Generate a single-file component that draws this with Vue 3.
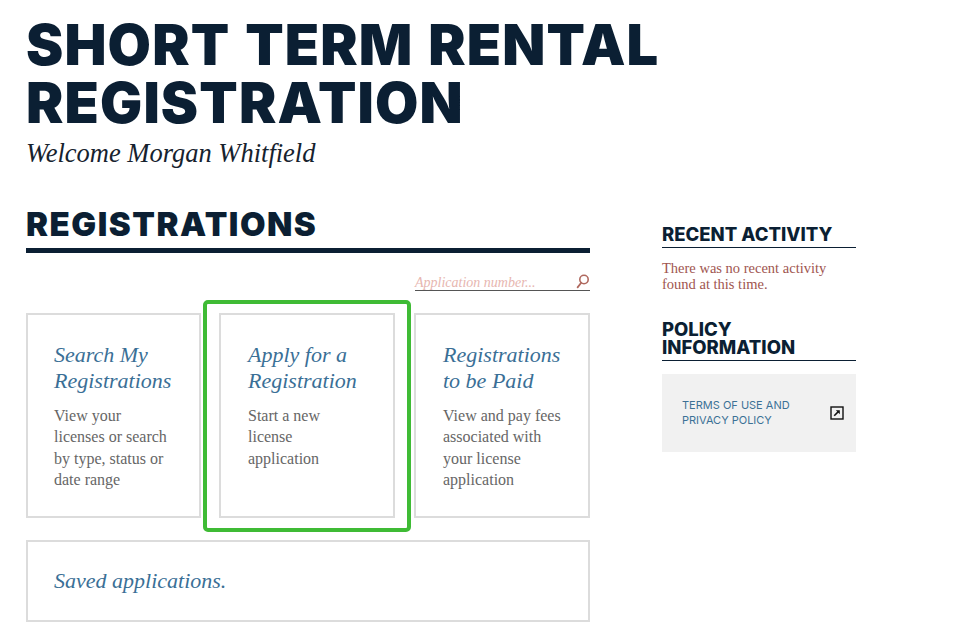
<script setup>
const cards = [
  { title: ['Search My', 'Registrations'], lines: ['View your', 'licenses or search', 'by type, status or', 'date range'] },
  { title: ['Apply for a', 'Registration'], lines: ['Start a new', 'license', 'application'], active: true },
  { title: ['Registrations', 'to be Paid'], lines: ['View and pay fees', 'associated with', 'your license', 'application'] }
]
</script>

<template>
  <div class="page">
    <header class="head">
      <h1 class="title">SHORT TERM RENTAL<br />REGISTRATION</h1>
      <p class="welcome">Welcome Morgan Whitfield</p>
    </header>
    <div class="columns">
      <main class="main">
        <h2 class="section">REGISTRATIONS</h2>
        <div class="search">
          <span class="placeholder">Application number...</span>
          <svg class="search-icon" width="14" height="15" viewBox="0 0 14 15" fill="none">
            <circle cx="8" cy="5.5" r="4.2" stroke="#b0695f" stroke-width="1.6" />
            <path d="M5.2 8.8 1.6 13.4" stroke="#b0695f" stroke-width="1.8" stroke-linecap="round" />
          </svg>
        </div>
        <div class="cards">
          <article v-for="card in cards" :key="card.title[0]" class="card">
            <h3 class="card-title"><span v-for="t in card.title" :key="t">{{ t }}</span></h3>
            <p class="card-text"><span v-for="l in card.lines" :key="l">{{ l }}</span></p>
            <div v-if="card.active" class="highlight"></div>
          </article>
        </div>
        <div class="saved">Saved applications.</div>
      </main>
      <aside class="side">
        <h3 class="side-head">RECENT ACTIVITY</h3>
        <p class="activity">There was no recent activity<br />found at this time.</p>
        <h3 class="side-head policy">POLICY<br />INFORMATION</h3>
        <div class="terms">
          <span class="terms-text">TERMS OF USE AND<br />PRIVACY POLICY</span>
          <svg class="ext" width="14" height="14" viewBox="0 0 14 14" fill="none">
            <rect x="1" y="1" width="12" height="12" stroke="#111" stroke-width="1.4" />
            <path d="M4.2 9.8 8.6 5.4" stroke="#111" stroke-width="1.6" />
            <path d="M5.8 4.2h4v4z" fill="#111" />
          </svg>
        </div>
      </aside>
    </div>
  </div>
</template>

<style>
html, body { margin: 0; background: #fff; }
</style>

<style scoped>
.page {
  width: 960px;
  height: 638px;
  overflow: hidden;
  box-sizing: border-box;
  padding: 16px 0 0 26px;
  font-family: "Liberation Serif", serif;
}
.title {
  margin: 0;
  font-family: Inter, sans-serif;
  font-weight: 900;
  font-size: 56px;
  line-height: 58px;
  letter-spacing: 1.15px;
  word-spacing: 2.5px;
  color: #0b1f33;
}
.welcome {
  margin: 5px 0 0;
  font-style: italic;
  font-size: 26.5px;
  line-height: 32px;
  color: #16222e;
}
.columns { display: flex; margin-top: 35px; }
.main { width: 564px; }
.section {
  margin: 0;
  font-family: Inter, sans-serif;
  font-weight: 900;
  font-size: 33px;
  line-height: 40px;
  letter-spacing: 1.5px;
  color: #0b1f33;
  border-bottom: 5px solid #0b1f33;
  padding-bottom: 4px;
}
.search {
  display: flex;
  justify-content: space-between;
  align-items: flex-end;
  margin: 19px 0 0 auto;
  width: 175px;
  height: 18px;
  border-bottom: 1.5px solid #555;
}
.placeholder {
  font-style: italic;
  font-size: 14px;
  line-height: 14px;
  color: #e7b6b0;
}
.search-icon { margin-bottom: 1px; }
.cards {
  display: grid;
  grid-template-columns: 175px 176px 177px;
  column-gap: 18px;
  margin-top: 21.5px;
}
.card {
  position: relative;
  box-sizing: border-box;
  height: 205px;
  padding: 27px 10px 0 27px;
  border: 2px solid #dcdcdc;
  background: #fff;
}
.card:first-child { padding-left: 26px; }
.card:nth-child(3) { margin-left: 1px; }
.card-title {
  margin: 0;
  font-weight: 400;
  font-style: italic;
  font-size: 22px;
  line-height: 26px;
  color: #3a6f96;
}
.card-title span, .card-text span { display: block; white-space: nowrap; }
.card-text {
  margin: 11px 0 0;
  font-size: 16px;
  line-height: 21.5px;
  color: #666;
}
.highlight {
  position: absolute;
  left: -18px;
  top: -15px;
  width: 200px;
  height: 224px;
  border: 4px solid #3fbb35;
  border-radius: 5px;
  pointer-events: none;
}
.saved {
  box-sizing: border-box;
  height: 82px;
  margin-top: 22px;
  padding: 0 26px;
  display: flex;
  align-items: center;
  border: 2px solid #dcdcdc;
  font-style: italic;
  font-size: 22px;
  color: #3a6f96;
}
.side { width: 194px; margin: 21px 0 0 72px; }
.side-head {
  margin: 0;
  font-family: Inter, sans-serif;
  font-weight: 800;
  font-size: 18.5px;
  line-height: 18px;
  color: #0b1f33;
  border-bottom: 1.5px solid #0b1f33;
  padding-bottom: 4px;
}
.activity {
  margin: 12px 0 0;
  font-size: 14.5px;
  line-height: 16px;
  color: #a0554f;
}
.policy { margin-top: 28px; }
.terms {
  display: flex;
  align-items: center;
  justify-content: space-between;
  box-sizing: border-box;
  height: 78px;
  margin-top: 13px;
  padding: 0 12px 0 20px;
  background: #f1f1f1;
}
.terms-text {
  font-family: Inter, sans-serif;
  font-size: 11px;
  line-height: 15px;
  color: #3c7196;
}
</style>
